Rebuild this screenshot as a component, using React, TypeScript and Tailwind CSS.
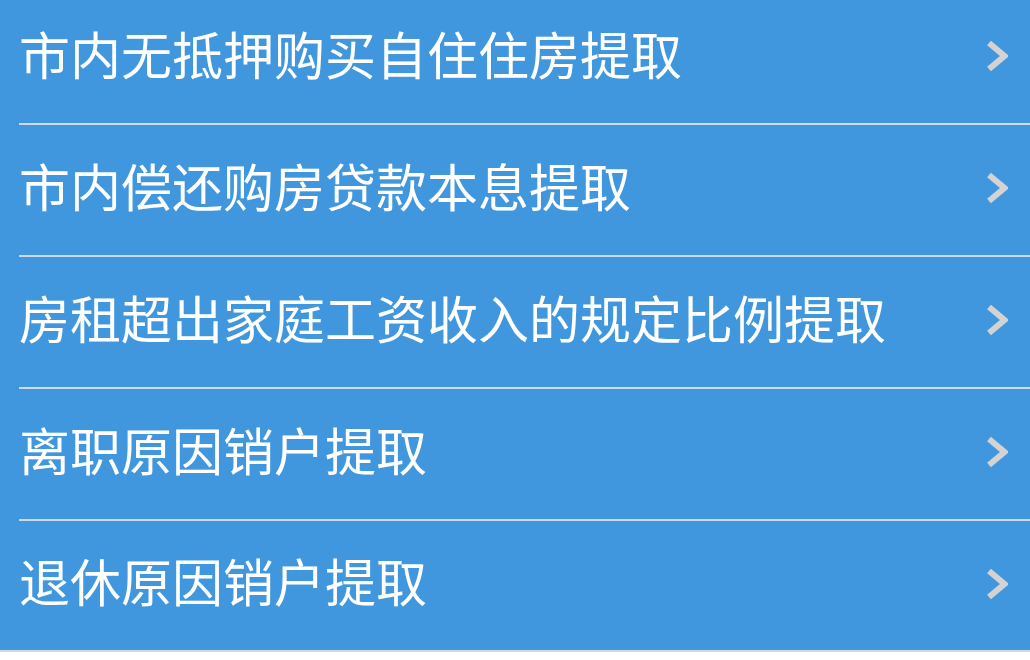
const items = [
  "市内无抵押购买自住住房提取",
  "市内偿还购房贷款本息提取",
  "房租超出家庭工资收入的规定比例提取",
  "离职原因销户提取",
  "退休原因销户提取",
];

function Chevron() {
  return (
    <svg width="22" height="32" viewBox="0 0 22 32" className="mb-[4px] shrink-0">
      <polyline
        points="3,3 18.5,16 3,29"
        fill="none"
        stroke="#d3d3d3"
        strokeWidth="6"
        strokeLinejoin="miter"
      />
    </svg>
  );
}

export default function App() {
  return (
    <div className="h-[660px] w-[1030px] overflow-hidden bg-white" style={{ fontFamily: '"Noto Sans CJK SC", "Noto Sans", sans-serif' }}>
      <ul className="-mt-[7px] border-b-2 border-[#d0d8e0] bg-[#4197dd] pl-[19px]">
        {items.map((label, i) => (
          <li
            key={label}
            className={`box-border flex items-center justify-between pr-[22px] ${
              i < items.length - 1 ? "h-[132px] border-b-2 border-[#cfd9e4]" : "h-[129px]"
            }`}
          >
            <span className="pb-[10px] text-[51px] leading-none text-white">{label}</span>
            <Chevron />
          </li>
        ))}
      </ul>
    </div>
  );
}
